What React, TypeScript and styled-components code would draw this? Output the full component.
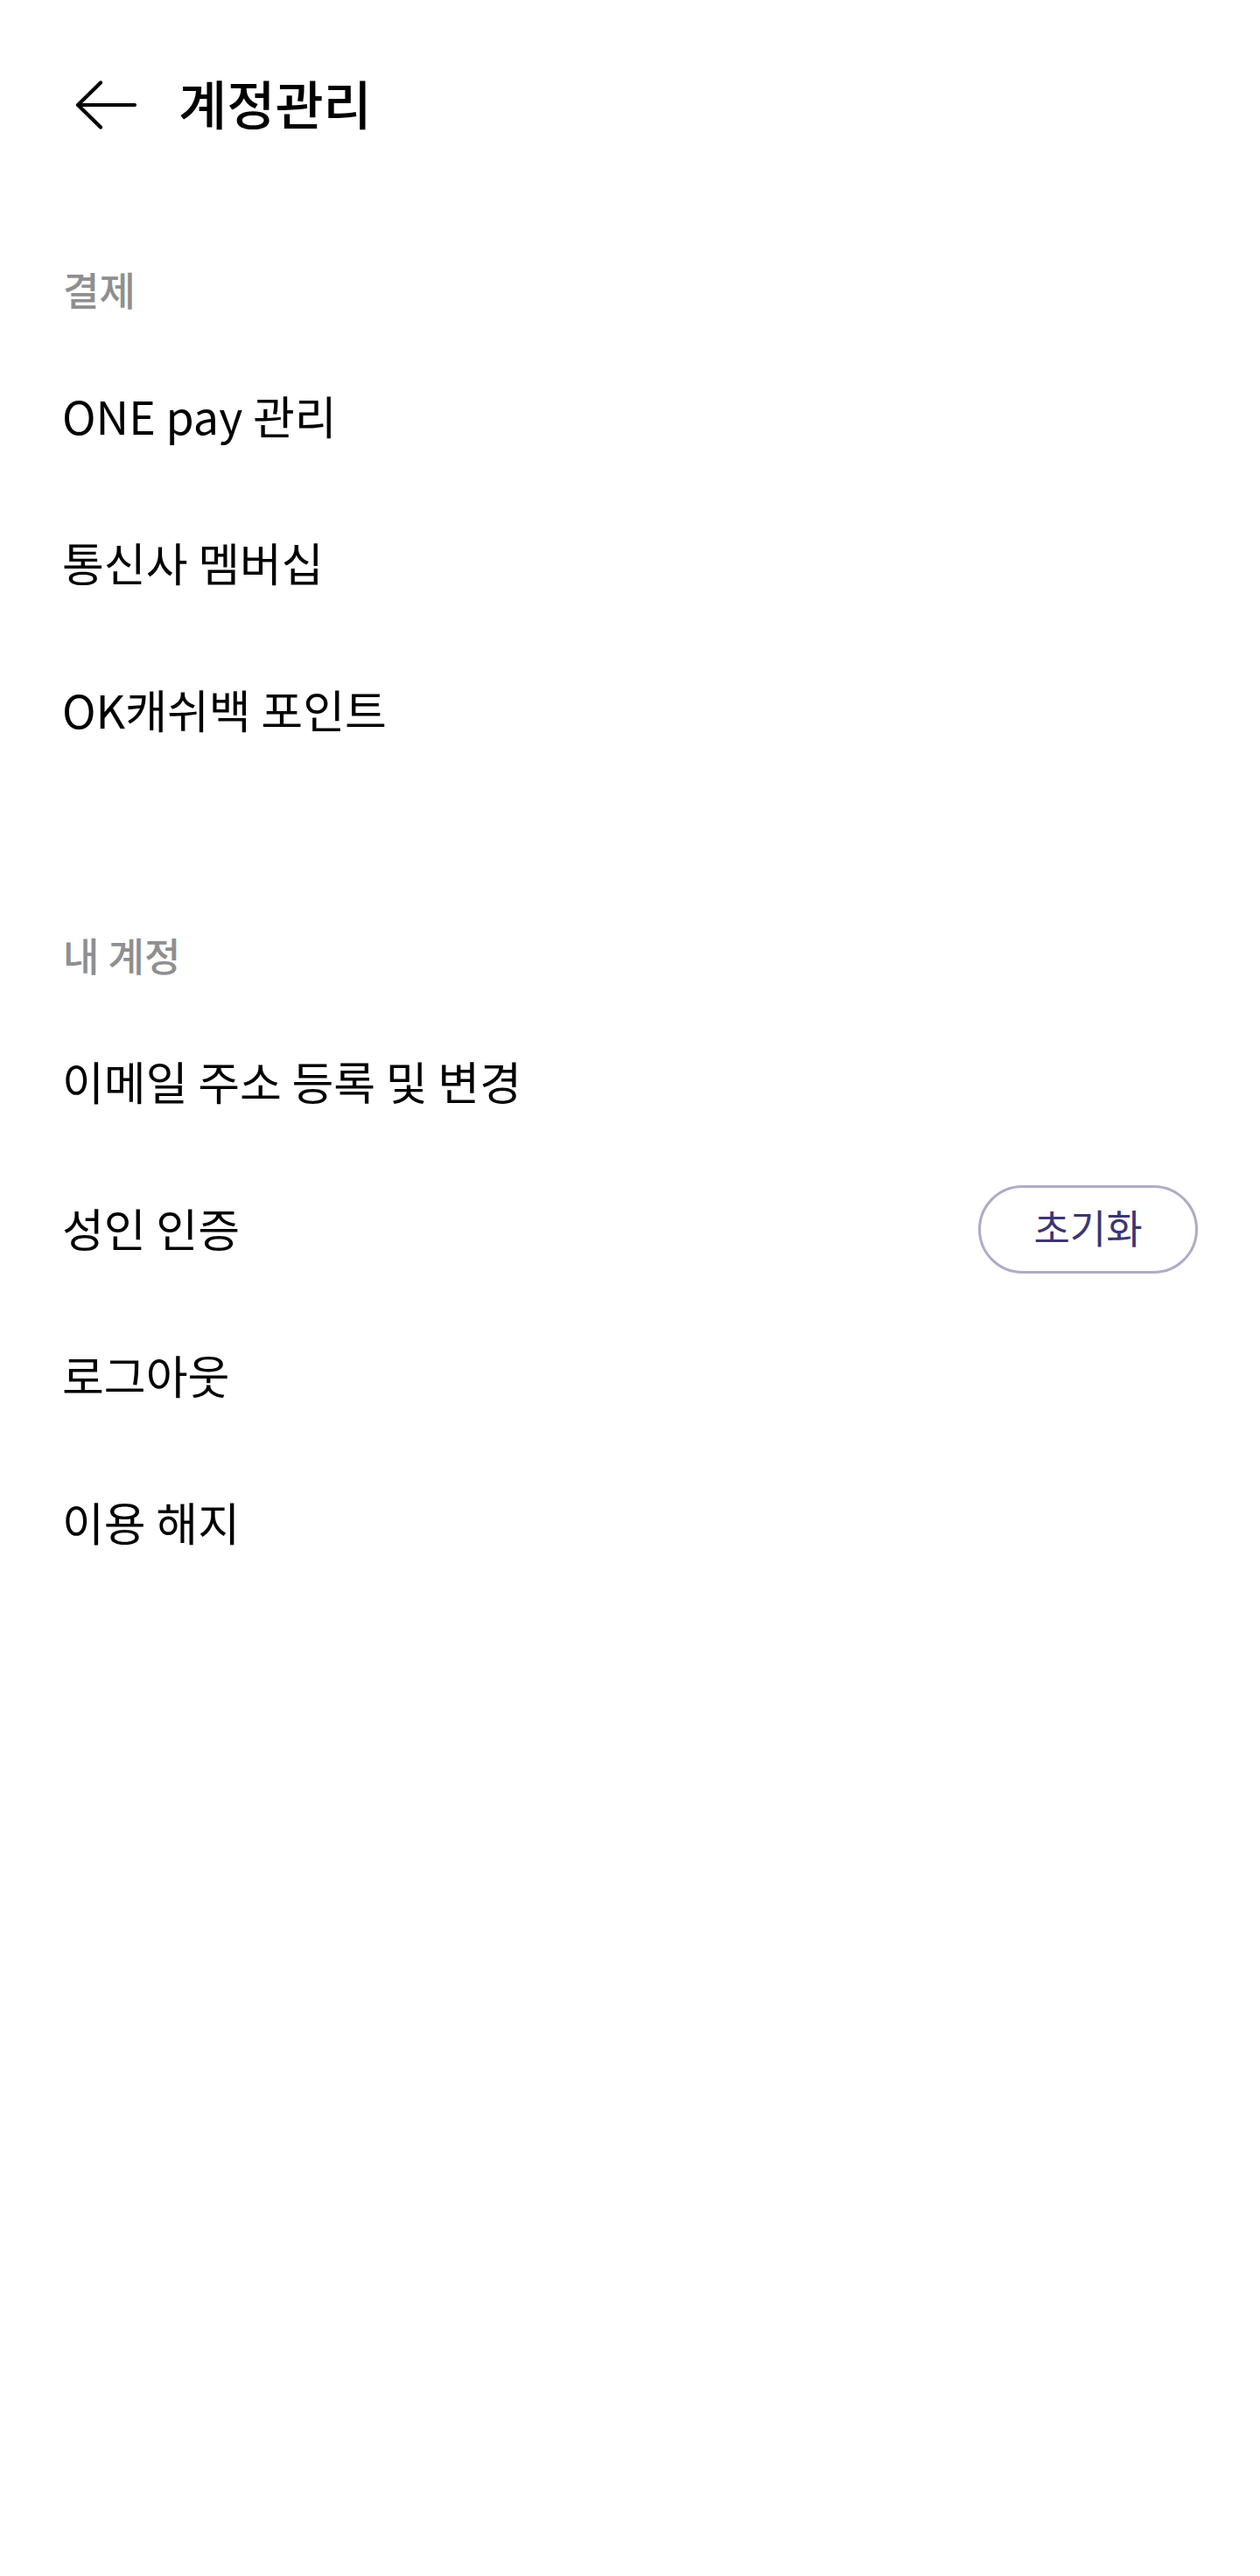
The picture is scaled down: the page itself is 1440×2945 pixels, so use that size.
import React from "react";
import styled, { createGlobalStyle } from "styled-components";

const Global = createGlobalStyle`
  html, body {
    margin: 0;
    padding: 0;
    background: #ffffff;
  }
  body {
    font-family: "Noto Sans CJK KR", "Noto Sans", sans-serif;
    color: #000000;
  }
`;

const Page = styled.div`
  width: 1440px;
  min-height: 2945px;
  background: #ffffff;
  display: flex;
  flex-direction: column;
`;

const Header = styled.header`
  height: 242px;
  display: flex;
  align-items: center;
  padding-left: 86px;
  gap: 46px;
`;

const BackButton = styled.button`
  border: none;
  background: none;
  padding: 0;
  display: flex;
  align-items: center;
  cursor: pointer;
`;

const Title = styled.h1`
  margin: 0;
  padding-bottom: 8px;
  font-size: 60px;
  font-weight: 500;
  letter-spacing: 0;
  color: #000;
  line-height: 1;
`;

const Section = styled.section<{ $first?: boolean }>`
  display: flex;
  flex-direction: column;
  margin-top: ${(p) => (p.$first ? "35px" : "141px")};
`;

const SectionLabel = styled.div`
  height: 116px;
  box-sizing: border-box;
  padding: 0 0 10px 72px;
  display: flex;
  align-items: center;
  font-size: 45px;
  font-weight: 500;
  color: #8f8f8f;
  line-height: 1;
`;

const Row = styled.div`
  height: 168px;
  box-sizing: border-box;
  display: flex;
  align-items: center;
  justify-content: space-between;
  padding: 0 71px 4px 71px;
  font-size: 52px;
  font-weight: 400;
  color: #000;
`;

const RowLabel = styled.span`
  line-height: 1;
`;

const PillButton = styled.button`
  width: 251px;
  height: 101px;
  margin-top: 2px;
  border-radius: 51px;
  border: 3px solid #afabc9;
  background: #ffffff;
  color: #3c3574;
  font-family: "Noto Sans CJK KR", "Noto Sans", sans-serif;
  font-size: 45px;
  font-weight: 400;
  line-height: 1;
  display: flex;
  align-items: center;
  justify-content: center;
  padding: 0 0 6px 0;
  box-sizing: border-box;
`;

const BackArrow = () => (
  <svg width="72" height="58" viewBox="0 0 72 58" fill="none">
    <path
      d="M3 28 H68 M3 28 L29 2.5 M3 28 L29 53.5"
      stroke="#000"
      strokeWidth="4.2"
      strokeLinecap="round"
      strokeLinejoin="round"
    />
  </svg>
);

const paymentItems = ["ONE pay 관리", "통신사 멤버십", "OK캐쉬백 포인트"];

export default function App() {
  return (
    <>
      <Global />
      <Page>
        <Header>
          <BackButton aria-label="뒤로">
            <BackArrow />
          </BackButton>
          <Title>계정관리</Title>
        </Header>

        <Section $first>
          <SectionLabel>결제</SectionLabel>
          {paymentItems.map((t) => (
            <Row key={t}>
              <RowLabel>{t}</RowLabel>
            </Row>
          ))}
        </Section>

        <Section>
          <SectionLabel>내 계정</SectionLabel>
          <Row>
            <RowLabel>이메일 주소 등록 및 변경</RowLabel>
          </Row>
          <Row>
            <RowLabel>성인 인증</RowLabel>
            <PillButton>초기화</PillButton>
          </Row>
          <Row>
            <RowLabel>로그아웃</RowLabel>
          </Row>
          <Row>
            <RowLabel>이용 해지</RowLabel>
          </Row>
        </Section>
      </Page>
    </>
  );
}
